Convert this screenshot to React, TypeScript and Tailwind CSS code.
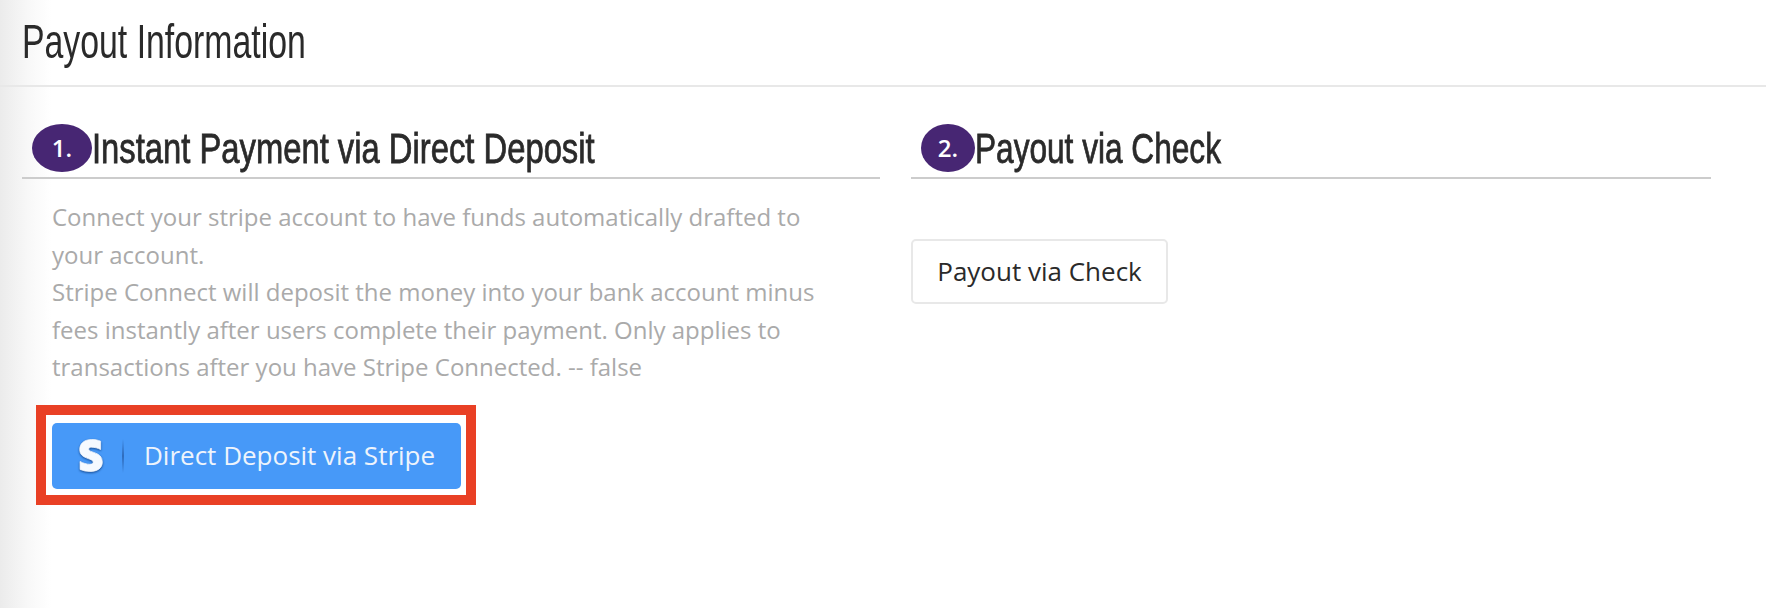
import React, { FC } from "react";
import { FaStripeS } from "react-icons/fa";

const SectionHead: FC<{ num: string; title: string; badgeClass: string; titleClass: string }> = ({
  num,
  title,
  badgeClass,
  titleClass,
}) => (
  <div className="h-[55px] flex items-start border-b-2 border-[#cccccc] pl-[10px]">
    <span
      className={`${badgeClass} h-[48px] rounded-[50%] bg-[#472673] text-white flex items-center justify-center text-[24px] font-semibold shrink-0 font-['Open_Sans',sans-serif]`}
    >
      {num}
    </span>
    <h2
      className={`${titleClass} text-[#2a2a2a] text-[43px] leading-[48px] font-['Liberation_Sans',sans-serif] whitespace-nowrap origin-left [-webkit-text-stroke:0.8px_#2a2a2a]`}
    >
      {title}
    </h2>
  </div>
);

const App: FC = () => {
  return (
    <div className="w-[1766px] h-[608px] overflow-hidden bg-[linear-gradient(90deg,#ebebeb_0,#f8f8f8_28px,#ffffff_52px)] font-['Open_Sans',sans-serif]">
      <div className="h-[87px] border-b-2 border-[#e8e8e8] pl-[22px] pt-[16px]">
        <h1 className="w-fit text-[#2a2a2a] text-[49px] leading-[50px] font-['Liberation_Sans',sans-serif] whitespace-nowrap origin-left scale-x-[0.69]">
          Payout Information
        </h1>
      </div>
      <div className="flex pt-[37px] pl-[22px]">
        <div className="w-[858px]">
          <SectionHead
            num="1."
            title="Instant Payment via Direct Deposit"
            badgeClass="w-[60px]"
            titleClass="scale-x-[0.762]"
          />
          <p className="mt-[19px] ml-[30px] w-[790px] text-[24px] leading-[37.5px] text-[#aaaaaa]">
            Connect your stripe account to have funds automatically drafted to your account.
            <br />
            Stripe Connect will deposit the money into your bank account minus fees instantly after users complete their payment. Only applies to transactions after you have Stripe Connected. -- false
          </p>
          <div className="mt-[19px] ml-[14px] w-[440px] h-[100px] border-[10px] border-[#e94025] bg-white pl-[6px] pt-[8px]">
            <button className="w-[409px] h-[66px] rounded-[5px] bg-[#4799f8] flex items-center text-white text-[26px]">
              <FaStripeS className="ml-[27px] w-[24px] h-[33px] text-[#f6faff] stroke-[#f6faff] stroke-[12px] drop-shadow-[0_1px_1px_rgba(0,40,100,0.7)]" />
              <span className="ml-[19px] w-[2px] h-[34px] bg-linear-to-b from-[#4799f8] via-[#2f6cbc] to-[#4799f8]" />
              <span className="ml-[20px] whitespace-nowrap text-[#eef4fc]">Direct Deposit via Stripe</span>
            </button>
          </div>
        </div>
        <div className="ml-[31px] w-[800px]">
          <SectionHead num="2." title="Payout via Check" badgeClass="w-[54px]" titleClass="scale-x-[0.735]" />
          <button className="mt-[60px] w-[257px] h-[65px] rounded-[5px] border-2 border-[#e8e8e8] bg-white text-[#2a2a2a] text-[26px]">
            Payout via Check
          </button>
        </div>
      </div>
    </div>
  );
};

export default App;
